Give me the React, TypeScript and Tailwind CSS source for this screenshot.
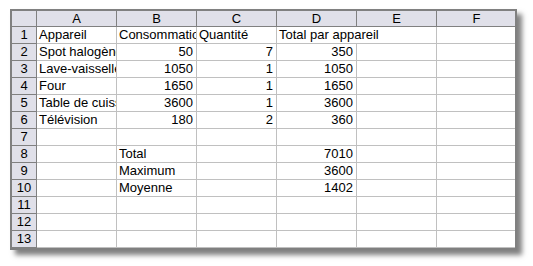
import React from "react";

type Cell = { v: string; num?: boolean; spill?: boolean };

const rows: Cell[][] = [
  [{ v: "Appareil" }, { v: "Consommation" }, { v: "Quantité" }, { v: "Total par appareil", spill: true }, { v: "" }, { v: "" }],
  [{ v: "Spot halogène" }, { v: "50", num: true }, { v: "7", num: true }, { v: "350", num: true }, { v: "" }, { v: "" }],
  [{ v: "Lave-vaisselle" }, { v: "1050", num: true }, { v: "1", num: true }, { v: "1050", num: true }, { v: "" }, { v: "" }],
  [{ v: "Four" }, { v: "1650", num: true }, { v: "1", num: true }, { v: "1650", num: true }, { v: "" }, { v: "" }],
  [{ v: "Table de cuisson" }, { v: "3600", num: true }, { v: "1", num: true }, { v: "3600", num: true }, { v: "" }, { v: "" }],
  [{ v: "Télévision" }, { v: "180", num: true }, { v: "2", num: true }, { v: "360", num: true }, { v: "" }, { v: "" }],
  [{ v: "" }, { v: "" }, { v: "" }, { v: "" }, { v: "" }, { v: "" }],
  [{ v: "" }, { v: "Total" }, { v: "" }, { v: "7010", num: true }, { v: "" }, { v: "" }],
  [{ v: "" }, { v: "Maximum" }, { v: "" }, { v: "3600", num: true }, { v: "" }, { v: "" }],
  [{ v: "" }, { v: "Moyenne" }, { v: "" }, { v: "1402", num: true }, { v: "" }, { v: "" }],
  [{ v: "" }, { v: "" }, { v: "" }, { v: "" }, { v: "" }, { v: "" }],
  [{ v: "" }, { v: "" }, { v: "" }, { v: "" }, { v: "" }, { v: "" }],
  [{ v: "" }, { v: "" }, { v: "" }, { v: "" }, { v: "" }, { v: "" }],
];

const cols = ["A", "B", "C", "D", "E", "F"];

export default function App() {
  return (
    <div
      className="w-[533px] h-[266px] bg-white pl-[10px] pt-[9px]"
      style={{ fontFamily: '"Liberation Sans", Arial, sans-serif' }}
    >
      <div className="w-[507px] h-[241px] border-2 border-[#808080] overflow-hidden bg-white shadow-[5px_5px_5px_rgba(0,0,0,0.5)] text-[13px] text-black">
        <div className="flex h-[16px] bg-[#e0e0e9] border-b border-[#808080] w-[600px]">
          <div className="w-[25px] shrink-0 border-r border-[#808080]" />
          {cols.map((c) => (
            <div
              key={c}
              className="w-[80px] shrink-0 border-r border-[#808080] flex items-center justify-center leading-[15px]"
            >
              {c}
            </div>
          ))}
        </div>
        {rows.map((r, i) => (
          <div key={i} className="flex h-[17px] w-[600px]">
            <div className="w-[25px] shrink-0 bg-[#e0e0e9] border-r border-b border-[#808080] flex items-center justify-center leading-[16px]">
              {i + 1}
            </div>
            {r.map((c, j) => (
              <div
                key={j}
                className={
                  c.spill
                    ? "w-[80px] shrink-0 border-b border-[#c0c0c0] relative z-10 whitespace-nowrap overflow-visible px-[2px] leading-[16px]"
                    : c.num
                    ? "w-[80px] shrink-0 border-r border-b border-[#c0c0c0] whitespace-nowrap overflow-hidden text-right px-[3px] leading-[16px]"
                    : "w-[80px] shrink-0 border-r border-b border-[#c0c0c0] whitespace-nowrap overflow-hidden px-[2px] leading-[16px]"
                }
              >
                {c.v}
              </div>
            ))}
          </div>
        ))}
      </div>
    </div>
  );
}
